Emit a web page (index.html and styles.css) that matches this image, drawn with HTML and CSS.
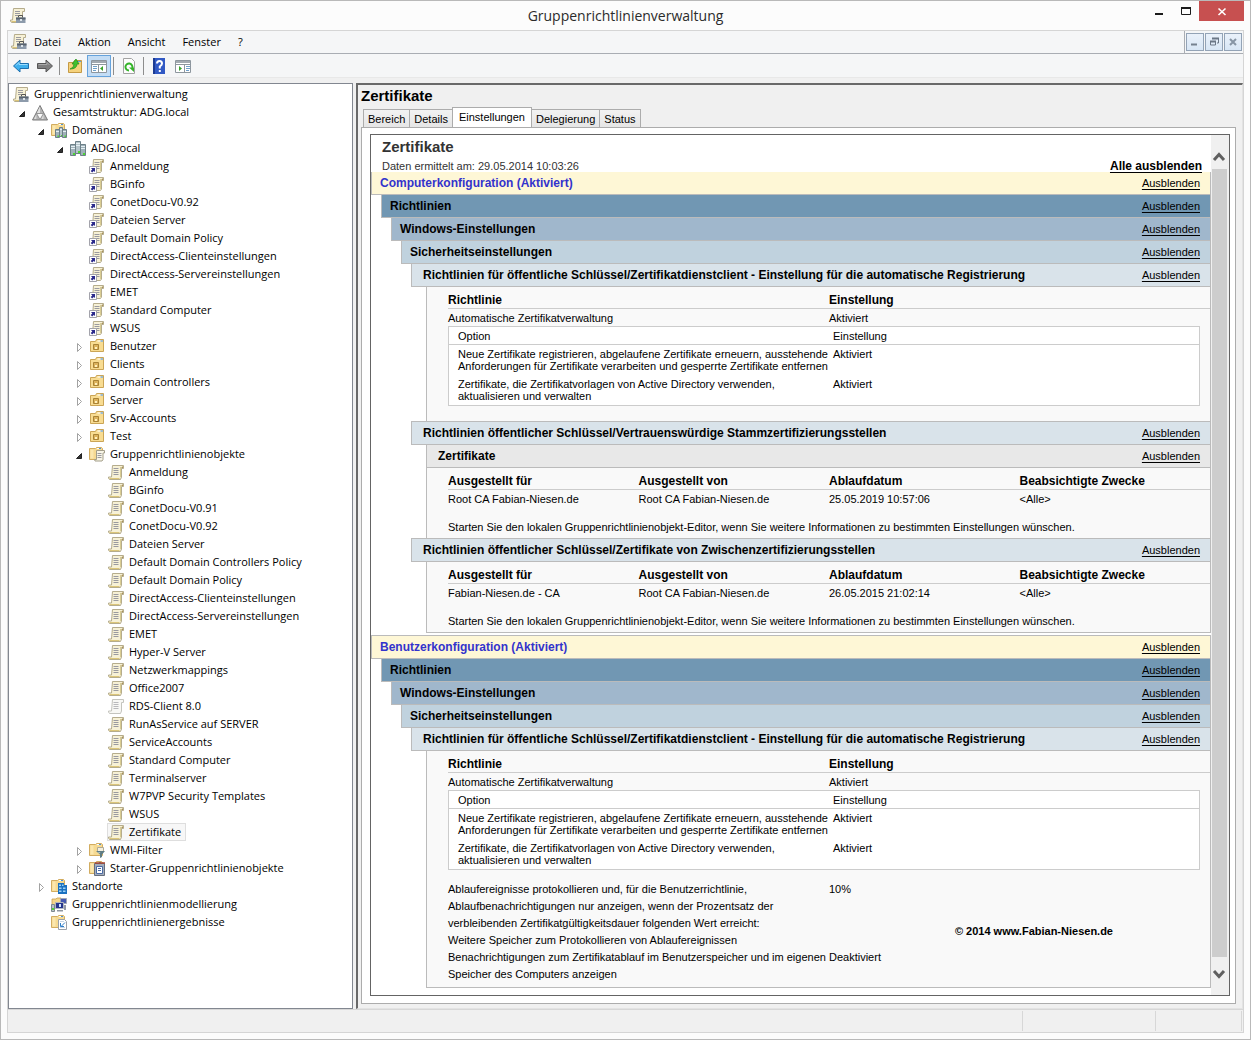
FILE: index.html
```
<!DOCTYPE html>
<html lang="de">
<head>
  <meta charset="UTF-8">
  <title>Gruppenrichtlinienverwaltung</title>
  <link rel="stylesheet" href="styles.css">
</head>
<body>
  <!-- Icons -->
  <svg class="sprite" aria-hidden="true">
    <symbol id="i-gpo" viewBox="0 0 16 16">
      <path d="M4.500 .5H15.500v3H13.500V12L12.500 14.500H1.500L.5 13V12H3.500z" fill="#f7f1d6" stroke="#b5ac8c"/>
      <path d="M12.500 2v10" stroke="#d9cc92"/>
      <path d="M1.500 13.500h10" stroke="#dcc67a"/>
      <path d="M5.500 3.500h5M5.500 5.500h5M5.500 7.500h5M5.500 9.500h5" stroke="#9a9aa0"/>
      <path d="M13 3h2V1z" fill="#a8915a"/>
    </symbol>
    <symbol id="i-gpo-off" viewBox="0 0 16 16">
      <path d="M4.500 .5H15.500v3H13.500V12L12.500 14.500H1.500L.5 13V12H3.500z" fill="#f8f8f5" stroke="#c4c4be"/>
      <path d="M5.500 3.500h5M5.500 5.500h5M5.500 7.500h5M5.500 9.500h5" stroke="#b9b9bc"/>
    </symbol>
    <symbol id="i-link" viewBox="0 0 16 16">
      <path d="M4.500 .5H14.500v3H12.500V12L11.500 13.500H3.500z" fill="#f7f1d6" stroke="#b5ac8c"/>
      <path d="M11.500 2v10" stroke="#d9cc92"/>
      <path d="M5.500 3.500h5M5.500 5.500h5M7 7.500h3.500M8 9.500h2.500" stroke="#9a9aa0"/>
      <path d="M12 3h2V1z" fill="#a8915a"/>
      <path d="M.5 7.500h7v7h-7z" fill="#fff" stroke="#a3a3ab"/>
      <path d="M2 9h4v4L4.800 11.900 3.200 13.500 1.700 12l1.600-1.600z" fill="#2b2a8c"/>
    </symbol>
    <symbol id="i-gpm" viewBox="0 0 16 16">
      <path d="M3.500 .5H14.500v3H12.500V12L11.500 14.500H1.500L.5 13V12H2.500z" fill="#f7f1d6" stroke="#b5ac8c"/>
      <path d="M5 3.500h5M5 5.500h5M5 7.500h3" stroke="#9a9aa0"/>
      <path d="M1.500 13.500h5" stroke="#dcc67a"/>
      <path d="M8.500 9.500V7.500h4v2" fill="none" stroke="#555"/>
      <path d="M6 9.500h9.500v5.500H6z" fill="#8d9bab"/>
      <path d="M6 9.500h9.500v2H6z" fill="#59636f"/>
      <path d="M10 11h2v2h-2z" fill="#dfe5ea"/>
    </symbol>
    <symbol id="i-forest" viewBox="0 0 16 16">
      <path d="M8 .5L15.500 15H.5z" fill="#b4b4b4" stroke="#7b7b7b"/>
      <path d="M8 1.500V8H4.800z" fill="#e2e2e2"/>
      <path d="M4.500 8.500h7L8 14.500z" fill="#fafafa" stroke="#868686" stroke-width=".8"/>
      <path d="M4.300 9.500V14H2z" fill="#dedede"/>
      <path d="M11.500 9.500V14H9.500z" fill="#dedede"/>
    </symbol>
    <symbol id="i-domain" viewBox="0 0 16 16">
      <path d="M5.500.5h5v12h-5z" fill="#b5c5cb" stroke="#6d8088"/>
      <path d="M.5 3.500h5v11h-5zM10.500 3.500h5v11h-5z" fill="#9fb1b9" stroke="#6d8088"/>
      <path d="M6 2.500h4M1 5.500h4M11 5.500h4M6 4.500h4M1 7.500h4M11 7.500h4" stroke="#e5eff3"/>
      <path d="M3 12h2v2H3zM13 12h2v2h-2zM8 10h2v2H8z" fill="#4fd534"/>
    </symbol>
    <symbol id="folder" viewBox="0 0 16 16">
      <path d="M.5 1.500h6l1-1h5l1 1v11H.5z" fill="#f6da92" stroke="#d2ac60"/>
      <path d="M1.500 2.500h3v9h-3z" fill="#fbe7ae"/>
      <path d="M8 1.500h4" stroke="#fff"/>
      <path d="M10 1.500h2" stroke="#4a90d8"/>
    </symbol>
    <symbol id="i-domains" viewBox="0 0 16 16">
      <use href="#folder"/>
      <path d="M8.500 4.500h3v9h-3z" fill="#b5c5cb" stroke="#6d8088"/>
      <path d="M4.500 6.500h4v8h-4zM11.500 6.500h4v8h-4z" fill="#9fb1b9" stroke="#6d8088"/>
      <path d="M5 8.500h3M12 8.500h3M9 6.500h2" stroke="#e5eff3"/>
      <path d="M6.500 12.500h1.500V14H6.500zM13.500 12.500H15V14h-1.500zM10 12h1v1h-1z" fill="#4fd534"/>
    </symbol>
    <symbol id="i-ou" viewBox="0 0 16 16">
      <path d="M1.500 2.500h5l1-2h7v12h-13z" fill="#f8dc92" stroke="#cba556"/>
      <path d="M8.500 2h5.500" stroke="#fff"/>
      <path d="M11.500 2H14" stroke="#3f8ad6"/>
      <path d="M4.500 5.500h5v5h-5z" fill="#dcb25c" stroke="#a98336"/>
      <path d="M6 8h2v2H6z" fill="#fff0bd"/>
    </symbol>
    <symbol id="i-objects" viewBox="0 0 16 16">
      <use href="#folder"/>
      <path d="M7.500 3.500h8v2.500h-1.500v6.500l-1 1.500H6l-.5-1.500h2z" fill="#f8f5e6" stroke="#a39e8a"/>
      <path d="M8.500 6.500h4M8.500 8.500h4M8.500 10.500h4" stroke="#9a9aa0"/>
    </symbol>
    <symbol id="i-wmi" viewBox="0 0 16 16">
      <use href="#folder"/>
      <path d="M8.500 4.500h6v4h-6z" fill="#f3efdf" stroke="#b0aa94"/>
      <path d="M7 8h9l-3 3.500v2.500l-2 1v-3.500z" fill="#5f7c84"/>
      <path d="M8.500 9h3l-1 1.500z" fill="#a8c4ca"/>
    </symbol>
    <symbol id="i-starter" viewBox="0 0 16 16">
      <use href="#folder"/>
      <path d="M5.500 2.500h10v12h-10z" fill="#a3adbc" stroke="#666e7d"/>
      <path d="M6 2h10" stroke="#a8452f" stroke-width="1.500"/>
      <path d="M7.500 5.500h6v7h-6z" fill="#fff" stroke="#4a6ba5"/>
      <path d="M9 7.500h3M9 9.500h3" stroke="#4a6ba5"/>
    </symbol>
    <symbol id="i-sites" viewBox="0 0 16 16">
      <use href="#folder"/>
      <path d="M7 4h6v2h3v9H7z" fill="#1b71c0"/>
      <path d="M8 5.500h2V7H8zM11 5.500h1.500V7H11zM8 8.500h2.500V10H8zM12 8.500h2.500V10H12zM8 11.500h2.500V13H8zM12 11.500h2.500V13H12z" fill="#9cd2f5"/>
    </symbol>
    <symbol id="i-model" viewBox="0 0 16 16">
      <path d="M1 2h4l1-1h4v8H1z" fill="#f4d68a" stroke="#c9a04e" stroke-width=".8"/>
      <path d="M9.500 1.500h6v5h-6z" fill="#4558b0" stroke="#a2a9b5"/>
      <path d="M4.500 5.500h8v6h-8z" fill="#26358c" stroke="#b0b6c0"/>
      <path d="M8 7h2v3H8z" fill="#cfe2ff"/>
      <path d="M.5 7.500h3v7h-3z" fill="#b8c3c8" stroke="#7d888e"/>
      <path d="M1 11h2v2H1z" fill="#4fd534"/>
      <path d="M6 13h6v1.500H6z" fill="#8f959e"/>
      <path d="M13 8h2v5h-2z" fill="#9299a8"/>
    </symbol>
    <symbol id="i-results" viewBox="0 0 16 16">
      <use href="#folder"/>
      <path d="M7.500 4.500h6l2 2v8h-8z" fill="#fff" stroke="#9aa0a8"/>
      <path d="M9 6.500h4M9 12.500h5" stroke="#c7d6e6"/>
      <path d="M9.500 8v3.500H13M10.500 11l3.500-3.500" fill="none" stroke="#2f7ec8"/>
    </symbol>
    <symbol id="t-open" viewBox="0 0 10 10"><path d="M7.500 2.500v5h-5z" fill="#333" stroke="#222"/></symbol>
    <symbol id="t-closed" viewBox="0 0 10 10"><path d="M3.500 .5L7.500 4.500 3.500 8.500z" fill="#fff" stroke="#a2a2a2"/></symbol>
  </svg>

  <div class="window">
    <header class="titlebar">
      <svg class="icon app-icon"><use href="#i-gpm"/></svg>
      <div class="title">Gruppenrichtlinienverwaltung</div>
      <div class="win-buttons">
        <button class="win-btn" aria-label="Minimieren"><svg width="28" height="20"><path d="M12 13h8" stroke="#1b1b1b" stroke-width="2"/></svg></button>
        <button class="win-btn" aria-label="Maximieren"><svg width="28" height="20"><path d="M10.500 7.500h9v6h-9z" fill="none" stroke="#1b1b1b"/><path d="M10 7h10" stroke="#1b1b1b" stroke-width="2"/></svg></button>
        <button class="win-btn close" aria-label="Schließen"><svg width="45" height="20"><path d="M19.500 7.500l7 6.500M26.500 7.500l-7 6.500" stroke="#fff" stroke-width="1.600"/></svg></button>
      </div>
    </header>

    <div class="frame">
      <nav class="menubar">
        <svg class="icon"><use href="#i-gpm"/></svg>
        <button class="menu">Datei</button>
        <button class="menu">Aktion</button>
        <button class="menu">Ansicht</button>
        <button class="menu">Fenster</button>
        <button class="menu">?</button>
        <div class="mdi">
          <button aria-label="Minimieren"><svg width="16" height="16"><path d="M4 10.500h6" stroke="#75818f" stroke-width="2"/></svg></button>
          <button aria-label="Wiederherstellen"><svg width="16" height="16"><path d="M6 4.500h6.500V9H11M4.500 7.500h5v3.500h-5z" fill="none" stroke="#6b7786"/><path d="M4 7.500h6M6 4.500h7" stroke="#6b7786" stroke-width="2"/></svg></button>
          <button aria-label="Schließen"><svg width="16" height="16"><path d="M5 5l6 6M11 5l-6 6" stroke="#8795a5" stroke-width="2"/></svg></button>
        </div>
      </nav>

      <div class="toolbar">
        <button class="tool" aria-label="Zurück"><svg width="18" height="16"><path d="M1.500 8l6.500-6v3.500h8.500v5H8V14z" fill="#3fb0ee" stroke="#1c6fae"/><path d="M4 7.500l3-3V6.500h8.500" fill="none" stroke="#9bdcff"/></svg></button>
        <button class="tool" aria-label="Vorwärts"><svg width="18" height="16"><path d="M16.500 8L10 2v3.500H1.500v5H10V14z" fill="#7f7f7f" stroke="#565656"/><path d="M2.500 6.500H11v-2l2.500 2.500" fill="none" stroke="#aaa"/></svg></button>
        <span class="sep"></span>
        <button class="tool" aria-label="Aufwärts"><svg width="18" height="16"><path d="M2.500 4.500h5l1-2h7v12h-13z" fill="#f5d27c" stroke="#c59a45"/><path d="M11 3.500h4" stroke="#5a9fe0"/><path d="M4 11q4-1 4-5H6l4-5 3 5h-2q0 5-7 5z" fill="#3fc12f" stroke="#218c18" stroke-width=".7"/></svg></button>
        <button class="tool active" aria-label="Konsolenstruktur anzeigen"><svg width="18" height="16"><path d="M1.500 2.500h15v12h-15z" fill="#fff" stroke="#8d969e"/><path d="M2 4h14" stroke="#a2a9b0" stroke-width="2"/><path d="M2 6.500h14M8.500 7v7.500" stroke="#8d969e"/><path d="M3 8.500h4M3 10.500h4M3 12.500h3" stroke="#6f9fc9"/><path d="M13 8v5l-3-2.500z" fill="#3aa32b"/></svg></button>
        <span class="sep"></span>
        <button class="tool" aria-label="Aktualisieren"><svg width="18" height="16"><path d="M3.500.5h8l3 3v12h-11z" fill="#fdfdfd" stroke="#a3a3a3"/><path d="M9 12.500A3.500 3.500 0 1 1 12.300 10" fill="none" stroke="#35b42a" stroke-width="2"/><path d="M9 9.500h5v4.500z" fill="#35b42a"/></svg></button>
        <span class="sep"></span>
        <button class="tool" aria-label="Hilfe"><svg width="18" height="16"><path d="M3 0h12v16H3z" fill="#3159c4"/><path d="M3 0h2v16H3z" fill="#1c3b92"/><path d="M7 5.500Q7 3 9.500 3T12 5.500Q12 7 9.800 8.500V10.500" fill="none" stroke="#fff" stroke-width="2"/><path d="M8.800 12h2v2h-2z" fill="#fff"/></svg></button>
        <button class="tool" aria-label="Aktionsbereich anzeigen"><svg width="18" height="16"><path d="M1.500 2.500h15v12h-15z" fill="#fff" stroke="#8d969e"/><path d="M2 4h14" stroke="#a2a9b0" stroke-width="2"/><path d="M2 6.500h14M10.500 7v7.500" stroke="#8d969e"/><path d="M12 8.500h4M12 10.500h4M12 12.500h3" stroke="#6f9fc9"/><path d="M5 8v5l3-2.500z" fill="#3aa32b"/></svg></button>
      </div>

      <main class="panes">
        <aside class="tree">
          <ul>
            <li><div class="node root"><span class="label"><svg class="icon"><use href="#i-gpm"/></svg>Gruppenrichtlinienverwaltung</span></div>
              <ul class="first">
                <li><div class="node"><button class="twisty" aria-label="Reduzieren"><svg><use href="#t-open"/></svg></button><span class="label"><svg class="icon"><use href="#i-forest"/></svg>Gesamtstruktur: ADG.local</span></div>
                  <ul>
                    <li><div class="node"><button class="twisty" aria-label="Reduzieren"><svg><use href="#t-open"/></svg></button><span class="label"><svg class="icon"><use href="#i-domains"/></svg>Domänen</span></div>
                      <ul>
                        <li><div class="node"><button class="twisty" aria-label="Reduzieren"><svg><use href="#t-open"/></svg></button><span class="label"><svg class="icon"><use href="#i-domain"/></svg>ADG.local</span></div>
                          <ul>
                            <li><div class="node"><span class="label"><svg class="icon"><use href="#i-link"/></svg>Anmeldung</span></div></li>
                            <li><div class="node"><span class="label"><svg class="icon"><use href="#i-link"/></svg>BGinfo</span></div></li>
                            <li><div class="node"><span class="label"><svg class="icon"><use href="#i-link"/></svg>ConetDocu-V0.92</span></div></li>
                            <li><div class="node"><span class="label"><svg class="icon"><use href="#i-link"/></svg>Dateien Server</span></div></li>
                            <li><div class="node"><span class="label"><svg class="icon"><use href="#i-link"/></svg>Default Domain Policy</span></div></li>
                            <li><div class="node"><span class="label"><svg class="icon"><use href="#i-link"/></svg>DirectAccess-Clienteinstellungen</span></div></li>
                            <li><div class="node"><span class="label"><svg class="icon"><use href="#i-link"/></svg>DirectAccess-Servereinstellungen</span></div></li>
                            <li><div class="node"><span class="label"><svg class="icon"><use href="#i-link"/></svg>EMET</span></div></li>
                            <li><div class="node"><span class="label"><svg class="icon"><use href="#i-link"/></svg>Standard Computer</span></div></li>
                            <li><div class="node"><span class="label"><svg class="icon"><use href="#i-link"/></svg>WSUS</span></div></li>
                            <li><div class="node"><button class="twisty" aria-label="Erweitern"><svg><use href="#t-closed"/></svg></button><span class="label"><svg class="icon"><use href="#i-ou"/></svg>Benutzer</span></div></li>
                            <li><div class="node"><button class="twisty" aria-label="Erweitern"><svg><use href="#t-closed"/></svg></button><span class="label"><svg class="icon"><use href="#i-ou"/></svg>Clients</span></div></li>
                            <li><div class="node"><button class="twisty" aria-label="Erweitern"><svg><use href="#t-closed"/></svg></button><span class="label"><svg class="icon"><use href="#i-ou"/></svg>Domain Controllers</span></div></li>
                            <li><div class="node"><button class="twisty" aria-label="Erweitern"><svg><use href="#t-closed"/></svg></button><span class="label"><svg class="icon"><use href="#i-ou"/></svg>Server</span></div></li>
                            <li><div class="node"><button class="twisty" aria-label="Erweitern"><svg><use href="#t-closed"/></svg></button><span class="label"><svg class="icon"><use href="#i-ou"/></svg>Srv-Accounts</span></div></li>
                            <li><div class="node"><button class="twisty" aria-label="Erweitern"><svg><use href="#t-closed"/></svg></button><span class="label"><svg class="icon"><use href="#i-ou"/></svg>Test</span></div></li>
                            <li><div class="node"><button class="twisty" aria-label="Reduzieren"><svg><use href="#t-open"/></svg></button><span class="label"><svg class="icon"><use href="#i-objects"/></svg>Gruppenrichtlinienobjekte</span></div>
                              <ul>
                                <li><div class="node"><span class="label"><svg class="icon"><use href="#i-gpo"/></svg>Anmeldung</span></div></li>
                                <li><div class="node"><span class="label"><svg class="icon"><use href="#i-gpo"/></svg>BGinfo</span></div></li>
                                <li><div class="node"><span class="label"><svg class="icon"><use href="#i-gpo"/></svg>ConetDocu-V0.91</span></div></li>
                                <li><div class="node"><span class="label"><svg class="icon"><use href="#i-gpo"/></svg>ConetDocu-V0.92</span></div></li>
                                <li><div class="node"><span class="label"><svg class="icon"><use href="#i-gpo"/></svg>Dateien Server</span></div></li>
                                <li><div class="node"><span class="label"><svg class="icon"><use href="#i-gpo"/></svg>Default Domain Controllers Policy</span></div></li>
                                <li><div class="node"><span class="label"><svg class="icon"><use href="#i-gpo"/></svg>Default Domain Policy</span></div></li>
                                <li><div class="node"><span class="label"><svg class="icon"><use href="#i-gpo"/></svg>DirectAccess-Clienteinstellungen</span></div></li>
                                <li><div class="node"><span class="label"><svg class="icon"><use href="#i-gpo"/></svg>DirectAccess-Servereinstellungen</span></div></li>
                                <li><div class="node"><span class="label"><svg class="icon"><use href="#i-gpo"/></svg>EMET</span></div></li>
                                <li><div class="node"><span class="label"><svg class="icon"><use href="#i-gpo"/></svg>Hyper-V Server</span></div></li>
                                <li><div class="node"><span class="label"><svg class="icon"><use href="#i-gpo"/></svg>Netzwerkmappings</span></div></li>
                                <li><div class="node"><span class="label"><svg class="icon"><use href="#i-gpo"/></svg>Office2007</span></div></li>
                                <li><div class="node"><span class="label"><svg class="icon"><use href="#i-gpo-off"/></svg>RDS-Client 8.0</span></div></li>
                                <li><div class="node"><span class="label"><svg class="icon"><use href="#i-gpo"/></svg>RunAsService auf SERVER</span></div></li>
                                <li><div class="node"><span class="label"><svg class="icon"><use href="#i-gpo"/></svg>ServiceAccounts</span></div></li>
                                <li><div class="node"><span class="label"><svg class="icon"><use href="#i-gpo"/></svg>Standard Computer</span></div></li>
                                <li><div class="node"><span class="label"><svg class="icon"><use href="#i-gpo"/></svg>Terminalserver</span></div></li>
                                <li><div class="node"><span class="label"><svg class="icon"><use href="#i-gpo"/></svg>W7PVP Security Templates</span></div></li>
                                <li><div class="node"><span class="label"><svg class="icon"><use href="#i-gpo"/></svg>WSUS</span></div></li>
                                <li><div class="node"><span class="label selected"><svg class="icon"><use href="#i-gpo"/></svg>Zertifikate</span></div></li>
                              </ul>
                            </li>
                            <li><div class="node"><button class="twisty" aria-label="Erweitern"><svg><use href="#t-closed"/></svg></button><span class="label"><svg class="icon"><use href="#i-wmi"/></svg>WMI-Filter</span></div></li>
                            <li><div class="node"><button class="twisty" aria-label="Erweitern"><svg><use href="#t-closed"/></svg></button><span class="label"><svg class="icon"><use href="#i-starter"/></svg>Starter-Gruppenrichtlinienobjekte</span></div></li>
                          </ul>
                        </li>
                      </ul>
                    </li>
                    <li><div class="node"><button class="twisty" aria-label="Erweitern"><svg><use href="#t-closed"/></svg></button><span class="label"><svg class="icon"><use href="#i-sites"/></svg>Standorte</span></div></li>
                    <li><div class="node"><span class="label"><svg class="icon"><use href="#i-model"/></svg>Gruppenrichtlinienmodellierung</span></div></li>
                    <li><div class="node"><span class="label"><svg class="icon"><use href="#i-results"/></svg>Gruppenrichtlinienergebnisse</span></div></li>
                  </ul>
                </li>
              </ul>
            </li>
          </ul>
        </aside>

        <section class="detail">
          <h1>Zertifikate</h1>
          <div class="tabs">
            <button class="tab">Bereich</button>
            <button class="tab">Details</button>
            <button class="tab current">Einstellungen</button>
            <button class="tab">Delegierung</button>
            <button class="tab">Status</button>
          </div>
          <div class="tab-page">
            <div class="report-box">
              <div class="report">
                <div class="report-head">
                  <h2>Zertifikate</h2>
                  <div class="meta">
                    <span>Daten ermittelt am: 29.05.2014 10:03:26</span>
                    <a href="#" class="hide-all">Alle ausblenden</a>
                  </div>
                </div>

                <!-- Computerkonfiguration -->
                <div class="bar config">Computerkonfiguration (Aktiviert)<a href="#">Ausblenden</a></div>
                <div class="indent">
                  <div class="bar lvl1">Richtlinien<a href="#">Ausblenden</a></div>
                  <div class="indent">
                    <div class="bar lvl2">Windows-Einstellungen<a href="#">Ausblenden</a></div>
                    <div class="indent">
                      <div class="bar lvl3">Sicherheitseinstellungen<a href="#">Ausblenden</a></div>
                      <div class="indent">
                        <div class="bar lvl4">Richtlinien für öffentliche Schlüssel/Zertifikatdienstclient - Einstellung für die automatische Registrierung<a href="#">Ausblenden</a></div>
                        <div class="content">
                          <table class="settings">
                            <thead><tr><th>Richtlinie</th><th>Einstellung</th></tr></thead>
                            <tbody>
                              <tr class="row"><td>Automatische Zertifikatverwaltung</td><td>Aktiviert</td></tr>
                              <tr><td colspan="2" class="nested">
                                <table class="options">
                                  <thead><tr><th>Option</th><th>Einstellung</th></tr></thead>
                                  <tbody>
                                    <tr><td>Neue Zertifikate registrieren, abgelaufene Zertifikate erneuern, ausstehende<br>Anforderungen für Zertifikate verarbeiten und gesperrte Zertifikate entfernen</td><td>Aktiviert</td></tr>
                                    <tr><td>Zertifikate, die Zertifikatvorlagen von Active Directory verwenden,<br>aktualisieren und verwalten</td><td>Aktiviert</td></tr>
                                  </tbody>
                                </table>
                              </td></tr>
                            </tbody>
                          </table>
                        </div>

                        <div class="bar lvl4 next">Richtlinien öffentlicher Schlüssel/Vertrauenswürdige Stammzertifizierungsstellen<a href="#">Ausblenden</a></div>
                        <div class="content">
                          <div class="bar sub">Zertifikate<a href="#">Ausblenden</a></div>
                          <table class="settings">
                            <thead><tr><th>Ausgestellt für</th><th>Ausgestellt von</th><th>Ablaufdatum</th><th>Beabsichtigte Zwecke</th></tr></thead>
                            <tbody><tr class="row"><td>Root CA Fabian-Niesen.de</td><td>Root CA Fabian-Niesen.de</td><td>25.05.2019 10:57:06</td><td>&lt;Alle&gt;</td></tr></tbody>
                          </table>
                          <p>Starten Sie den lokalen Gruppenrichtlinienobjekt-Editor, wenn Sie weitere Informationen zu bestimmten Einstellungen wünschen.</p>
                        </div>

                        <div class="bar lvl4 next">Richtlinien öffentlicher Schlüssel/Zertifikate von Zwischenzertifizierungsstellen<a href="#">Ausblenden</a></div>
                        <div class="content last">
                          <table class="settings">
                            <thead><tr><th>Ausgestellt für</th><th>Ausgestellt von</th><th>Ablaufdatum</th><th>Beabsichtigte Zwecke</th></tr></thead>
                            <tbody><tr class="row"><td>Fabian-Niesen.de - CA</td><td>Root CA Fabian-Niesen.de</td><td>26.05.2015 21:02:14</td><td>&lt;Alle&gt;</td></tr></tbody>
                          </table>
                          <p>Starten Sie den lokalen Gruppenrichtlinienobjekt-Editor, wenn Sie weitere Informationen zu bestimmten Einstellungen wünschen.</p>
                        </div>
                      </div>
                    </div>
                  </div>
                </div>

                <!-- Benutzerkonfiguration -->
                <div class="bar config next">Benutzerkonfiguration (Aktiviert)<a href="#">Ausblenden</a></div>
                <div class="indent">
                  <div class="bar lvl1">Richtlinien<a href="#">Ausblenden</a></div>
                  <div class="indent">
                    <div class="bar lvl2">Windows-Einstellungen<a href="#">Ausblenden</a></div>
                    <div class="indent">
                      <div class="bar lvl3">Sicherheitseinstellungen<a href="#">Ausblenden</a></div>
                      <div class="indent">
                        <div class="bar lvl4">Richtlinien für öffentliche Schlüssel/Zertifikatdienstclient - Einstellung für die automatische Registrierung<a href="#">Ausblenden</a></div>
                        <div class="content last">
                          <table class="settings">
                            <thead><tr><th>Richtlinie</th><th>Einstellung</th></tr></thead>
                            <tbody>
                              <tr class="row"><td>Automatische Zertifikatverwaltung</td><td>Aktiviert</td></tr>
                              <tr><td colspan="2" class="nested">
                                <table class="options">
                                  <thead><tr><th>Option</th><th>Einstellung</th></tr></thead>
                                  <tbody>
                                    <tr><td>Neue Zertifikate registrieren, abgelaufene Zertifikate erneuern, ausstehende<br>Anforderungen für Zertifikate verarbeiten und gesperrte Zertifikate entfernen</td><td>Aktiviert</td></tr>
                                    <tr><td>Zertifikate, die Zertifikatvorlagen von Active Directory verwenden,<br>aktualisieren und verwalten</td><td>Aktiviert</td></tr>
                                  </tbody>
                                </table>
                              </td></tr>
                              <tr><td>Ablaufereignisse protokollieren und, für die Benutzerrichtlinie, Ablaufbenachrichtigungen nur anzeigen, wenn der Prozentsatz der verbleibenden Zertifikatgültigkeitsdauer folgenden Wert erreicht:</td><td>10%</td></tr>
                              <tr><td>Weitere Speicher zum Protokollieren von Ablaufereignissen</td><td></td></tr>
                              <tr><td>Benachrichtigungen zum Zertifikatablauf im Benutzerspeicher und im eigenen Speicher des Computers anzeigen</td><td>Deaktiviert</td></tr>
                            </tbody>
                          </table>
                          <div class="copyright">© 2014 www.Fabian-Niesen.de</div>
                        </div>
                      </div>
                    </div>
                  </div>
                </div>
              </div>

              <div class="scrollbar">
                <button aria-label="Nach oben"><svg width="15" height="34"><path d="M2 25l5-5.500 5 5.500" fill="none" stroke="#606060" stroke-width="3"/></svg></button>
                <div class="thumb"></div>
                <button aria-label="Nach unten"><svg width="15" height="38"><path d="M2 14l5 5.500 5-5.500" fill="none" stroke="#606060" stroke-width="3"/></svg></button>
              </div>
            </div>
          </div>
        </section>
      </main>

      <footer class="statusbar"><div></div><div></div><div></div></footer>
    </div>
  </div>
</body>
</html>
```

FILE: styles.css
```
* { box-sizing: border-box; }
html, body { height: 100%; }
body {
  margin: 0;
  font-family: "Open Sans", "Noto Sans", sans-serif;
  font-size: 11px;
  color: #000;
}
button {
  font: inherit;
  color: inherit;
  border: none;
  background: none;
  padding: 0;
  margin: 0;
}
svg { display: block; }
.sprite { position: absolute; width: 0; height: 0; }
.icon { width: 16px; height: 16px; flex: none; }

.window {
  min-height: 100%;
  display: flex;
  flex-direction: column;
  background: #fcfcfc;
  border: 1px solid #b9b9b9;
  padding: 0 6px 6px;
}

/* Titelleiste */
.titlebar {
  display: grid;
  grid-template-columns: 1fr auto 1fr;
  height: 29px;
}
.app-icon { margin: 7px 0 0 3px; }
.title { font-size: 14px; line-height: 30px; color: #2b2b2b; }
.win-buttons { display: flex; justify-content: flex-end; align-items: flex-start; }
.close { background: #c75050; }

.frame {
  flex: 1;
  display: flex;
  flex-direction: column;
  border: 1px solid #d5d5d5;
  background: #f0f0f0;
}

/* Menü und Symbolleiste */
.menubar {
  display: flex;
  align-items: center;
  height: 23px;
  padding-left: 3px;
  background: #f5f6f7;
  border-bottom: 1px solid #a9adb3;
}
.menubar .icon { margin-right: 7px; }
.menu { margin-right: 17px; padding-bottom: 2px; }
.mdi {
  display: flex;
  gap: 1px;
  align-self: stretch;
  align-items: center;
  margin-left: auto;
  padding: 0 1px;
  border-left: 1px solid #a9adb3;
}
.mdi button {
  width: 18px;
  height: 18px;
  border: 1px solid #93a3b6;
  background: linear-gradient(#eaf1fa, #d8e6f5);
}
.toolbar {
  display: flex;
  align-items: center;
  height: 24px;
  padding-left: 1px;
  background: #f5f6f7;
  border-bottom: 1px solid #e8e8e8;
}
.tool { width: 24px; height: 22px; padding-left: 3px; }
.tool.active { background: #c4ddf5; border: 1px solid #66a3dc; padding-left: 2px; }
.sep { width: 1px; height: 18px; margin: 0 3px 0 2px; background: #8d8d8d; }

.panes {
  flex: 1;
  display: flex;
  gap: 3px;
  padding: 5px 0 0;
}

/* Konsolenstruktur */
.tree {
  flex: none;
  width: 345px;
  padding: 1px 0 0 3px;
  background: #fff;
  border: 1px solid #828790;
}
.tree ul { list-style: none; margin: 0; padding: 0 0 0 19px; }
.tree > ul, .tree ul.first { padding-left: 0; }
.node { display: flex; align-items: center; height: 18px; padding-left: 19px; }
.node.root { padding-left: 0; }
.twisty { width: 19px; height: 18px; margin-left: -19px; padding: 3px 0 0 5px; }
.twisty svg { width: 10px; height: 10px; }
.label {
  display: flex;
  align-items: center;
  gap: 5px;
  height: 18px;
  padding: 0 4px 2px 0;
  border: 1px solid transparent;
  white-space: nowrap;
}
.label .icon { margin-top: 4px; }
.selected { background: #f7f7f7; border-color: #dedede; }

/* Detailbereich */
.detail {
  flex: 1;
  min-width: 0;
  display: flex;
  flex-direction: column;
  padding: 0 6px 4px 3px;
  border: 1px solid #e3e3e3;
  border-top: 2px solid #696969;
  border-left: 2px solid #696969;
  font-family: "Liberation Sans", Arial, sans-serif;
}
h1 { margin: 0; font-size: 15px; line-height: 22px; }
.tabs { display: flex; align-items: flex-end; height: 20px; padding-left: 2px; }
.tab {
  height: 18px;
  padding: 0 4px;
  background: linear-gradient(#f2f2f2, #e6e6e6);
  border: 1px solid #acacac;
  border-bottom: none;
  margin-right: -1px;
}
.tab.current {
  height: 21px;
  margin-bottom: -1px;
  padding: 0 6px 2px;
  background: #fff;
}
.tab-page {
  flex: 1;
  display: flex;
  padding: 6px 5px 7px 8px;
  background: #fff;
  border: 1px solid #acacac;
}
.report-box { flex: 1; display: flex; border: 1px solid #646464; min-width: 0; }
.report { flex: 1; min-width: 0; }
.scrollbar { flex: none; display: flex; flex-direction: column; width: 18px; background: #f0f0f0; padding: 0 2px 0 1px; }
.thumb { flex: 1; background: #cdcdcd; }

/* Bericht */
.report a { color: #000; font-weight: normal; font-size: 11px; text-underline-offset: 2px; }
.report-head { height: 37px; padding: 2px 9px 0 11px; color: #333; }
.report-head h2 { margin: 0; font-size: 15px; line-height: 20px; }
.meta { display: flex; justify-content: space-between; line-height: 18px; }
.report .hide-all { font-weight: bold; font-size: 12px; }

.bar {
  display: flex;
  justify-content: space-between;
  height: 23px;
  padding: 0 10px 0 8px;
  border: 1px solid #bbb;
  border-top: none;
  font-size: 12px;
  font-weight: bold;
  line-height: 22px;
  white-space: nowrap;
}
.bar.next { height: 24px; border-top: 1px solid #bbb; }
.config { background: #fef7d6; color: #33c; }
.config.next { margin-top: 2px; }
.lvl1 { background: #7197b3; }
.lvl2 { background: #a0b7cc; }
.lvl3 { background: #c0d2de; }
.lvl4 { background: #d9e3ea; padding-left: 11px; }
.indent { margin-left: 10px; }

.content {
  position: relative;
  margin-left: 15px;
  background: #f9f9f9;
  border: solid #bbb;
  border-width: 0 1px;
}
.content.last { border-bottom-width: 1px; }
.sub { background: #e8e8e8; padding-left: 11px; border-width: 0 0 1px; }
.content p { margin: 12px 0 0; padding: 0 0 2px 21px; line-height: 17px; }

.settings { width: calc(100% - 21px); margin-left: 21px; border-collapse: collapse; table-layout: fixed; }
th { text-align: left; }
.settings th { padding: 5px 0 0; font-size: 12px; line-height: 16px; border-bottom: 1px solid #ccc; }
.settings td { padding: 0; line-height: 17px; vertical-align: top; }
.settings .row td { padding-top: 2px; line-height: 15px; }
.settings .nested { padding: 0 10px 11px 0; }
.content:not(.last) .nested { padding-bottom: 15px; }

.options { width: 100%; border-collapse: collapse; table-layout: fixed; background: #fff; border: 1px solid #ccc; }
.settings .options th { padding: 2px 0 0 9px; font-size: 11px; font-weight: normal; line-height: 15px; }
.settings .options td { padding: 3px 0 3px 9px; line-height: 12px; white-space: nowrap; }
.last .settings { margin-bottom: 4px; }

.copyright {
  position: absolute;
  right: 97px;
  bottom: 48px;
  font-weight: bold;
  line-height: 16px;
}

/* Statusleiste */
.statusbar {
  display: flex;
  height: 23px;
  padding: 1px 1px 1px 0;
  border-top: 1px solid #d7d7d7;
}
.statusbar div { width: 86px; border-right: 1px solid #d7d7d7; }
.statusbar div:nth-child(1) { flex: 1; }
.statusbar div:nth-child(2) { width: 133px; }
```
